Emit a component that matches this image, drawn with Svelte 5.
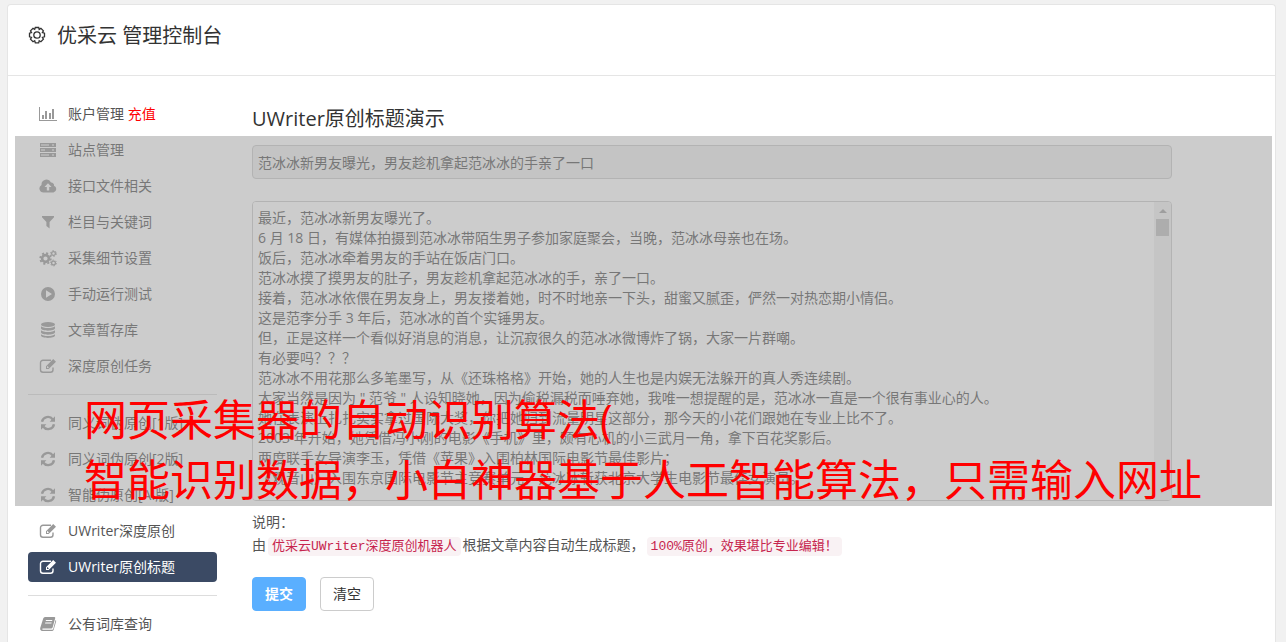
<script>
    // Sidebar groups, separated by a divider
    const menuGroups = [
        [
            { label: "账户管理", icon: "chart", extra: "充值" },
            { label: "站点管理", icon: "server" },
            { label: "接口文件相关", icon: "cloud" },
            { label: "栏目与关键词", icon: "filter" },
            { label: "采集细节设置", icon: "cogs" },
            { label: "手动运行测试", icon: "play" },
            { label: "文章暂存库", icon: "database" },
            { label: "深度原创任务", icon: "edit" },
        ],
        [
            { label: "同义词伪原创[1版]", icon: "refresh" },
            { label: "同义词伪原创[2版]", icon: "refresh" },
            { label: "智能伪原创[AI版]", icon: "refresh" },
            { label: "UWriter深度原创", icon: "edit" },
            { label: "UWriter原创标题", icon: "edit" },
        ],
        [{ label: "公有词库查询", icon: "book" }],
    ];
    let selected = $state("UWriter原创标题");

    let title = $state("范冰冰新男友曝光，男友趁机拿起范冰冰的手亲了一口");
    let article = $state(
        [
            "最近，范冰冰新男友曝光了。",
            "6 月 18 日，有媒体拍摄到范冰冰带陌生男子参加家庭聚会，当晚，范冰冰母亲也在场。",
            "饭后，范冰冰牵着男友的手站在饭店门口。",
            "范冰冰摸了摸男友的肚子，男友趁机拿起范冰冰的手，亲了一口。",
            "接着，范冰冰依偎在男友身上，男友搂着她，时不时地亲一下头，甜蜜又腻歪，俨然一对热恋期小情侣。",
            "这是范李分手 3 年后，范冰冰的首个实锤男友。",
            "但，正是这样一个看似好消息的消息，让沉寂很久的范冰冰微博炸了锅，大家一片群嘲。",
            "有必要吗？？？",
            "范冰冰不用花那么多笔墨写，从《还珠格格》开始，她的人生也是内娱无法躲开的真人秀连续剧。",
            '大家当然是因为 " 范爷 " 人设知晓她，因为偷税漏税而唾弃她，我唯一想提醒的是，范冰冰一直是一个很有事业心的人。',
            "她在表演上扎扎实实拿过国际大奖，你把她归到流量明星这部分，那今天的小花们跟她在专业上比不了。",
            "2003 年开始，她凭借冯小刚的电影《手机》里，颇有心机的小三武月一角，拿下百花奖影后。",
            "两度联手女导演李玉，凭借《苹果》入围柏林国际电影节最佳影片；",
            "《观音山》入围东京国际电影节主竞赛单元，范冰冰斩获北京大学生电影节最佳女演员。",
        ].join("\n")
    );

    function clearForm() {
        title = "";
        article = "";
    }
</script>

{#snippet menuIcon(name)}
    <svg class="icon" viewBox="0 0 18 18" aria-hidden="true">
        {#if name === "chart"}
            <path d="M0 2h1v13h17v1H0zM3 10h2v4H3zM6 6h2v8H6zM10 8h2v6h-2zM13 4h2v10h-2z" />
        {:else if name === "server"}
            <path fill-rule="evenodd" d="M1 2h16v4H1zM2 3.500v1h8v-1zM13 3.500v1h2v-1zM1 7h16v4H1zM2 8.500v1h4v-1zM13 8.500v1h2v-1zM1 12h16v4H1zM2 13.500v1h8v-1zM13 13.500v1h2v-1z" />
        {:else if name === "cloud"}
            <path fill-rule="evenodd" d="M4.500 15.500A4 4 0 0 1 2.500 8 5 5 0 0 1 12 5.500a2.800 2.800 0 0 1 3 3.300 3.500 3.500 0 0 1-.500 6.700zM9 6.300L5.500 10h2.300v3.500h2.400V10h2.300z" />
        {:else if name === "filter"}
            <path d="M3 3h12v1.200L10.600 9v6.500L7.400 13V9L3 4.200z" />
        {:else if name === "cogs"}
            <circle cx="6.500" cy="9.500" r="3.400" fill="none" stroke="currentColor" stroke-width="2.600" />
            <circle cx="6.500" cy="9.500" r="5.300" fill="none" stroke="currentColor" stroke-width="1.800" stroke-dasharray="2.080" />
            <circle cx="14.500" cy="4.500" r="1.900" fill="none" stroke="currentColor" stroke-width="1.300" />
            <circle cx="14.500" cy="4.500" r="2.900" fill="none" stroke="currentColor" stroke-dasharray="1.520" />
            <circle cx="14.500" cy="14" r="1.900" fill="none" stroke="currentColor" stroke-width="1.300" />
            <circle cx="14.500" cy="14" r="2.900" fill="none" stroke="currentColor" stroke-dasharray="1.520" />
        {:else if name === "play"}
            <path fill-rule="evenodd" d="M9 2a7 7 0 1 0 0 14A7 7 0 0 0 9 2zM7 5.300L13 9l-6 3.700z" />
        {:else if name === "database"}
            <ellipse cx="9" cy="3.500" rx="7" ry="2.500" />
            <path d="M2 5.300c2 2.400 12 2.400 14 0v2c0 3.200-14 3.200-14 0zM2 9.300c2 2.400 12 2.400 14 0v2c0 3.200-14 3.200-14 0zM2 13.300c2 2.400 12 2.400 14 0v1.200c0 3.200-14 3.200-14 0z" />
        {:else if name === "edit"}
            <path fill="none" stroke="currentColor" stroke-width="1.400" d="M12 3.200H4A2.500 2.500 0 0 0 1.500 5.700v7A2.500 2.500 0 0 0 4 15.200h7.500a2.500 2.500 0 0 0 2.500-2.500V10.500" />
            <path fill-rule="evenodd" d="M14.200 2L17 4.800 9.700 12H7V9.200zM8 9.700V11h1.300l.5-.6-1.300-1.300z" />
        {:else if name === "refresh"}
            <path fill="none" stroke="currentColor" stroke-width="2.400" d="M3 7.800a6 6 0 0 1 10.800-2.300M15 10.200a6 6 0 0 1-10.800 2.300" />
            <path d="M16 2.300v5.400h-5.400zM2 15.700v-5.400h5.400z" />
        {:else if name === "book"}
            <path fill-rule="evenodd" d="M6 2h9.500q1 .2.700 1.300L13.600 12.500q-.4 1-1.400 1H3.600q-1 .7.300 1.300h9.300q.8-.1 1-.8L16.600 5q.8.5.5 1.400l-2.400 8.300q-.5 1.300-1.700 1.300H3.300Q.8 15.500 1.200 13L4.200 3.500Q4.700 2 6 2zM7 5l-.3 1h6.400l.3-1zM6.300 7.500l-.3 1h6.400l.3-1z" />
        {/if}
    </svg>
{/snippet}

<div class="panel">
    <header>
        <svg class="gear" viewBox="0 0 20 20" aria-hidden="true">
            <path d="M8.300 1.500h3.400l.5 1.900 1.700-1 2.500 2.400-1 1.800 2.100.6v3.600l-2.100.6 1 1.800-2.500 2.500-1.700-1-.5 2.100H8.300l-.6-2.100-1.700 1-2.500-2.500 1-1.800-2-.6V7.200l2-.6-1-1.800L6 2.400l1.700 1z" />
            <circle cx="10" cy="9" r="3.200" />
        </svg>
        <h1>优采云 管理控制台</h1>
    </header>

    <div class="content">
        <nav>
            {#each menuGroups as group, i}
                {#if i > 0}
                    <hr />
                {/if}
                {#each group as item (item.label)}
                    <a
                        href="#menu"
                        class:active={selected === item.label}
                        onclick={() => (selected = item.label)}
                    >
                        {@render menuIcon(item.icon)}
                        <span>{item.label} {#if item.extra}<b>{item.extra}</b>{/if}</span>
                    </a>
                {/each}
            {/each}
        </nav>

        <main>
            <h2>UWriter原创标题演示</h2>

            <input type="text" aria-label="标题" bind:value={title} disabled />

            <div class="editor">
                <textarea aria-label="文章内容" bind:value={article}></textarea>
                <div class="scrollbar" aria-hidden="true">
                    <span class="arrow"></span>
                    <span class="thumb"></span>
                </div>
            </div>

            <div class="notes">
                <p>说明：</p>
                <p>由<code>优采云UWriter深度原创机器人</code>根据文章内容自动生成标题，<code>100%原创，效果堪比专业编辑！</code></p>
            </div>

            <div class="buttons">
                <button class="primary" type="button">提交</button>
                <button type="button" onclick={clearForm}>清空</button>
            </div>
        </main>
    </div>

    <!-- Translucent caption lying over the page -->
    <div class="caption">
        <p>网页采集器的自动识别算法(</p>
        <p>智能识别数据，小白神器基于人工智能算法，只需输入网址</p>
    </div>
</div>

<style>
    :global(body) {
        background: #f1f1f1;
        color: #555;
        font-family: "Open Sans", "Noto Sans CJK SC", sans-serif;
        font-size: 14px;
        line-height: 20px;
    }

    * {
        box-sizing: border-box;
    }

    h1, h2, p {
        margin: 0;
        font-weight: normal;
    }

    .panel {
        position: relative;
        min-height: calc(100vh - 4px);
        margin: 4px 10px 0 7px;
        border: 1px solid #e5e5e5;
        border-bottom: none;
        border-radius: 4px 4px 0 0;
        background: #fff;
    }

    header {
        display: flex;
        align-items: center;
        gap: 10px;
        height: 71px;
        padding: 0 19px 8px;
        border-bottom: 1px solid #e5e5e5;
        color: #333;
    }

    h1 {
        font-size: 20px;
        line-height: 30px;
    }

    .gear {
        width: 20px;
        height: 20px;
        fill: none;
        stroke: currentColor;
        stroke-width: 1.3;
    }

    .content {
        display: flex;
        gap: 35px;
        padding: 23px 20px 0;
    }

    nav {
        display: flex;
        flex-direction: column;
        flex: 0 0 189px;
        gap: 6px;
    }

    nav hr {
        width: 100%;
        margin: 7px 0;
        border: none;
        border-top: 1px solid #ddd;
    }

    nav a {
        display: flex;
        align-items: center;
        gap: 11px;
        height: 30px;
        padding: 0 11px;
        border-radius: 4px;
        color: #555;
        text-decoration: none;
    }

    nav a.active {
        background: #3b4a64;
        color: #fff;
    }

    nav b {
        color: #f00;
        font-weight: normal;
    }

    .icon {
        width: 18px;
        height: 18px;
        fill: currentColor;
        color: #999;
    }

    .active .icon {
        color: #fff;
    }

    main {
        flex: 1;
        min-width: 0;
        max-width: 920px;
        padding-top: 5px;
    }

    h2 {
        margin-bottom: 11px;
        color: #333;
        font-size: 20px;
        line-height: 30px;
    }

    input, textarea {
        font: inherit;
        color: #555;
    }

    input {
        display: block;
        width: 100%;
        height: 34px;
        padding: 0 5px;
        border: 1px solid #ccc;
        border-radius: 4px;
        background: #eee;
    }

    .editor {
        display: flex;
        height: 300px;
        margin-top: 22px;
        border: 1px solid #ccc;
        border-radius: 4px;
        overflow: hidden;
    }

    textarea {
        flex: 1;
        padding: 6px 5px;
        border: none;
        outline: none;
        resize: none;
        background: #fff;
    }

    .scrollbar {
        display: flex;
        flex-direction: column;
        align-items: center;
        width: 17px;
        background: #f1f1f1;
    }

    .arrow {
        margin: 7px 0 6px;
        border: 4px solid transparent;
        border-top: none;
        border-bottom-color: #a3a3a3;
    }

    .thumb {
        width: 13px;
        height: 17px;
        background: #c1c1c1;
    }

    .notes {
        margin-top: 9px;
        line-height: 23px;
    }

    code {
        margin: 0 2px;
        padding: 2px 4px;
        border-radius: 4px;
        background: #f9f2f4;
        color: #c7254e;
        font-family: "Liberation Mono", "Noto Sans CJK SC", monospace;
        font-size: 13px;
        line-height: 15px;
    }

    .buttons {
        display: flex;
        gap: 14px;
        margin-top: 21px;
    }

    button {
        width: 54px;
        height: 34px;
        padding: 0;
        border: 1px solid #ccc;
        border-radius: 4px;
        background: #fff;
        color: #333;
        font: inherit;
        cursor: pointer;
    }

    button.primary {
        border-color: #5aafff;
        background: #5aafff;
        color: #fff;
        font-weight: bold;
    }

    .caption {
        position: absolute;
        top: 131px;
        right: 3px;
        left: 7px;
        height: 370px;
        padding: 254px 0 0 69px;
        background: rgba(153, 153, 153, 0.5);
        color: #f00;
        font-size: 43px;
        line-height: 60px;
        white-space: nowrap;
        pointer-events: none;
    }
</style>
